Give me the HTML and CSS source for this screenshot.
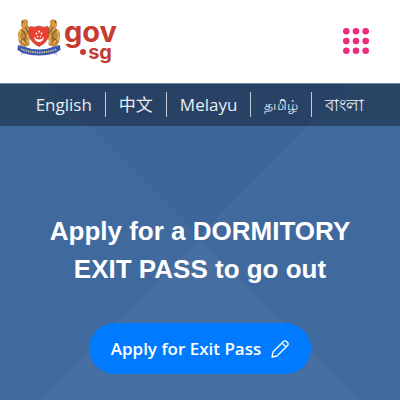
FILE: index.html
```html
<!DOCTYPE html>
<html lang="en">
<head>
<meta charset="utf-8">
<meta name="viewport" content="width=device-width, initial-scale=1">
<title>Exit Pass</title>
<link rel="stylesheet" href="styles.css">
</head>
<body>
<header class="site-header">
  <a class="brand" href="#">
    <svg class="crest" viewBox="0 0 44 38" aria-hidden="true">
      <g id="supporter">
        <path d="M5 1l4-.8 2 2-.4 3.4 2.4 4 1.6 5-1 4.500-1.500 3 .5 4-5 2-4-2-2-4-.6-7 2-4 2.500-2L4 6z" fill="#c28a3b"/>
        <path d="M5 2l3-1 2 2-1 3 2 4-2 3-3-2-2-5z" fill="#d79a4a"/>
        <path d="M4 11l3 2 2 4-2 4 3 3M8 8l3 5 3 1M3 23l4-4M5 14l-3 4" fill="none" stroke="#76501f" stroke-width="1"/>
        <path d="M1 14l2-3 1 3-2 4 2 4M10 16l2 4-2 4M5 22l3 2" fill="none" stroke="#edc064" stroke-width="1.2"/>
        <circle cx="5.500" cy="3" r="1" fill="#76501f"/>
      </g>
      <use href="#supporter" transform="matrix(-1 0 0 1 44 0)"/>
      <path d="M13.500 7.500q4 1.500 8.500-.5 4.500 2 8.500.5l1 1v8q-1 7-9.500 11-8.500-4-9.500-11v-8z" fill="#e94031" stroke="#a34a36" stroke-width=".7"/>
      <path d="M17 17c0 8 10 8 10 0-1 4.500-9 4.500-10 0" fill="#fff"/>
      <g fill="#fff"><circle cx="22" cy="12.500" r="1"/><circle cx="19.500" cy="14.500" r=".9"/><circle cx="24.500" cy="14.500" r=".9"/><circle cx="20.500" cy="17.500" r=".8"/><circle cx="23.500" cy="17.500" r=".8"/></g>
      <path d="M4 31l-.5 6 4-2M40 31l.5 6-4-2" fill="#d5d6dc"/>
      <path d="M1 26l4 1q17 7 34 0l4-1 .5 5-5 3q-16.500 5-33 0l-5-3z" fill="#3c57b1"/>
      <path d="M4 30q18 7 36 0" fill="none" stroke="#c1bd82" stroke-width="1.800" stroke-dasharray="1.500 .8"/>
    </svg>
    <span class="wordmark">
      <span class="gov">gov</span>
      <span class="sg"><span class="dot"></span>sg</span>
    </span>
  </a>
  <button class="menu" type="button" aria-label="Menu">
    <svg class="menu-icon" viewBox="0 0 26 26" fill="#ed2a7c" aria-hidden="true">
      <circle cx="3.300" cy="3.300" r="3.300"/><circle cx="13" cy="3.300" r="3.300"/><circle cx="22.700" cy="3.300" r="3.300"/>
      <circle cx="3.300" cy="13" r="3.300"/><circle cx="13" cy="13" r="3.300"/><circle cx="22.700" cy="13" r="3.300"/>
      <circle cx="3.300" cy="22.700" r="3.300"/><circle cx="13" cy="22.700" r="3.300"/><circle cx="22.700" cy="22.700" r="3.300"/>
    </svg>
  </button>
</header>
<div class="page">
  <svg class="backdrop" viewBox="0 0 400 317" preserveAspectRatio="xMidYMid slice" aria-hidden="true">
    <path d="M48 0L200 152 353 0z" fill="#3c659a"/>
    <path d="M353 0L200 153" stroke="#4870a2" fill="none"/>
    <path d="M200 156L39 317H361z" fill="#476fa1"/>
  </svg>
  <nav class="languages" aria-label="Language">
    <a href="#">English</a>
    <a href="#" lang="zh">中文</a>
    <a href="#" lang="ms">Melayu</a>
    <a class="compact" href="#" lang="ta">தமிழ்</a>
    <a href="#" lang="bn">বাংলা</a>
  </nav>
  <main class="hero">
    <h1>Apply for a DORMITORY EXIT PASS to go out</h1>
    <a class="apply" href="#">Apply for Exit Pass
      <svg class="pencil" viewBox="0 0 18 18" fill="none" stroke="#fff" stroke-width="1.300" stroke-linejoin="round" aria-hidden="true">
        <path d="M1 17l1-5L12.500 1.500q1.500-1.300 3 0l1 1q1.300 1.500 0 3L6 16zM11 3l4 4"/>
      </svg>
    </a>
  </main>
</div>
</body>
</html>
```
FILE: styles.css
```css
* {
  box-sizing: border-box;
}

body {
  margin: 0;
  min-height: 100vh;
  display: flex;
  flex-direction: column;
  background: #fff;
  color: #fff;
  font-family: "Open Sans", "Noto Sans", "Noto Sans CJK SC", sans-serif;
}

a {
  color: inherit;
  text-decoration: none;
}

.site-header {
  display: flex;
  align-items: center;
  justify-content: space-between;
  padding: 19px 28px 20px 17px;
}

.brand {
  display: flex;
  align-items: flex-start;
  gap: 3px;
}

.crest {
  width: 44px;
  height: 38px;
}

.wordmark {
  display: flex;
  flex-direction: column;
  padding-bottom: 4px;
  color: #c43b32;
  font-family: Inter, sans-serif;
  font-weight: 700;
}

.gov {
  font-size: 29px;
  line-height: 26px;
}

.sg {
  display: flex;
  align-items: center;
  justify-content: flex-end;
  gap: 2px;
  padding-right: 5px;
  font-size: 20px;
  line-height: 14px;
}

.dot {
  width: 6px;
  height: 6px;
  border-radius: 50%;
  background: currentColor;
}

.menu {
  display: flex;
  padding: 3px;
  border: 0;
  background: none;
}

.menu-icon {
  width: 26px;
  height: 26px;
}

.page {
  position: relative;
  flex: 1;
  display: flex;
  flex-direction: column;
  background: #406a9d;
}

.backdrop {
  position: absolute;
  inset: 0;
  width: 100%;
  height: 100%;
}

.languages {
  position: relative;
  display: flex;
  justify-content: center;
  padding: 8px 0 9px;
  border-top: 1px solid #72859a;
  background: rgba(17, 32, 48, 0.5);
  color: #e8edf2;
  font-size: 17px;
  line-height: 25px;
}

.languages a {
  padding: 0 13px;
}

.languages a + a {
  border-left: 1px solid #c3ccd6;
}

.languages .compact {
  font-size: 14px;
}

.hero {
  position: relative;
  display: flex;
  flex-direction: column;
  align-items: center;
  gap: 35px;
  padding: 86px 40px 26px;
}

h1 {
  margin: 0;
  font-family: "Liberation Sans", sans-serif;
  font-size: 26px;
  font-weight: 700;
  line-height: 38px;
  text-align: center;
}

.apply {
  display: flex;
  align-items: center;
  gap: 10px;
  padding: 13px 22px;
  border-radius: 26px;
  background: #007bff;
  font-size: 17px;
  font-weight: 600;
  line-height: 25px;
}

.pencil {
  width: 18px;
  height: 18px;
}
```
